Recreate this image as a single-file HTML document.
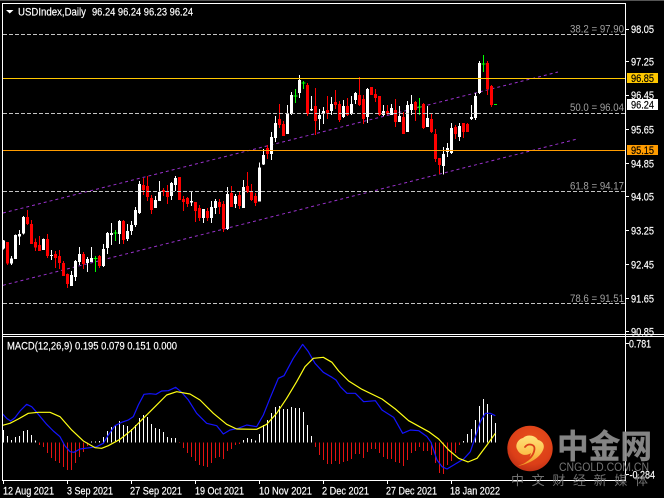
<!DOCTYPE html>
<html><head><meta charset="utf-8"><title>USDIndex Daily</title>
<style>
html,body{margin:0;padding:0;background:#000;width:664px;height:498px;overflow:hidden}
svg{display:block}
text{font-family:"Liberation Sans","Noto Sans CJK SC",sans-serif;font-size:11px;fill:#fff;stroke:#fff;stroke-width:.18px}
text.g{fill:#a0a0a0;stroke:none}
text.k{fill:#000;stroke:#000}
</style></head><body>
<svg width="664" height="498" viewBox="0 0 664 498" xmlns="http://www.w3.org/2000/svg">
<rect width="664" height="498" fill="#000"/>
<rect width="664" height="1" fill="#555"/>

<!-- channel lines -->
<g fill="none" stroke="#9932cc" stroke-dasharray="3 3">
<path d="M3 213L558 72"/>
<path d="M3 285.3L576 139.3"/>
</g>

<!-- candles -->
<g transform="scale(.33333)" shape-rendering="crispEdges" fill="none">
<g transform="translate(0,510)">
<path stroke="#fff" stroke-width="3" d="M10.5 210V238M34.5 258V285M46.5 193V267M58.5 180V225M70.5 138V193M130.5 205V240M154.5 240V270M214.5 303V348M226.5 270V333M238.5 231V285M262.5 261V306M274.5 231V276M310.5 222V291M322.5 186V252M334.5 159V225M358.5 150V222M382.5 162V213M394.5 153V195M406.5 111V171M418.5 33V132M466.5 78V114M478.5 33V93M514.5 36V90M526.5 18V63M574.5 66V108M610.5 117V159M634.5 93V159M646.5 87V132M682.5 51V180M706.5 72V114M730.5 30V114"/>
<path stroke="#fff" stroke-width="9" d="M10.5 212V235M34.5 266V280M46.5 195V267M58.5 192V200M70.5 141V190M130.5 207V240M154.5 255V258M214.5 315V348M226.5 273V321M238.5 252V276M262.5 267V279M274.5 264V276M310.5 237V288M322.5 189V234M334.5 189V195M358.5 153V192M382.5 183V207M394.5 165V183M406.5 120V165M418.5 42V129M466.5 90V114M478.5 66V93M514.5 39V78M526.5 24V45M574.5 93V98M610.5 117V144M634.5 111V144M646.5 93V114M682.5 72V177M706.5 78V102M730.5 51V114"/>
<path stroke="#f00" stroke-width="3" d="M22.5 216V285M82.5 120V165M94.5 150V222M106.5 205V243M118.5 198V243M142.5 192V264M166.5 243V294M178.5 240V297M190.5 273V318M202.5 310V354M250.5 246V297M298.5 255V294M370.5 150V222M430.5 24V75M442.5 18V93M454.5 75V132M490.5 54V78M502.5 45V102M538.5 21V90M550.5 78V123M562.5 81V111M586.5 96V156M598.5 105V153M622.5 114V153M658.5 87V132M670.5 93V186M694.5 48V111M718.5 66V117M742.5 6V69M754.5 42V93M766.5 69V108"/>
<path stroke="#f00" stroke-width="9" d="M22.5 216V280M82.5 141V162M94.5 162V222M106.5 216V232M118.5 225V243M142.5 207V258M166.5 252V264M178.5 258V279M190.5 279V318M202.5 312V342M250.5 252V282M298.5 258V288M370.5 153V210M430.5 45V60M442.5 48V81M454.5 84V120M490.5 60V66M502.5 66V81M538.5 21V90M550.5 87V96M562.5 84V102M586.5 96V123M598.5 114V144M622.5 123V144M658.5 96V111M670.5 102V177M694.5 69V111M718.5 75V108M742.5 48V66M754.5 63V90M766.5 78V99"/>
<path stroke="#0f0" stroke-width="3" d="M286.5 258V306M346.5 180V213M340.5 189.500H352.500M280.500 265.500H292.500"/>
</g>
<g>
<path stroke="#fff" stroke-width="3" d="M778.500 487V604M790.500 447V495M814.500 396V480M826.500 348V426M862.500 315V402M874.500 276V345M898.500 225V294M934.500 288V333M958.500 327V390M970.500 321V372M994.500 291V345"/>
<path stroke="#fff" stroke-width="9" d="M778.500 502V604M790.500 465V493M814.500 411V462M826.500 369V414M862.500 342V402M874.500 285V342M898.500 240V279M934.500 327V331M958.500 345V357M970.500 333V339M994.500 312V333"/>
<path stroke="#f00" stroke-width="3" d="M802.500 435V477M838.500 312V384M850.500 363V408M922.500 249V348M946.500 264V405M982.500 288V357"/>
<path stroke="#f00" stroke-width="9" d="M802.500 444V462M838.500 357V375M850.500 372V408M922.500 255V342M946.500 318V363M982.500 330V340"/>
<path stroke="#0f0" stroke-width="3" d="M886.500 267V309M910.500 243V267M880.500 288.500H892.500M904.500 249.500H916.500"/>
</g>
<g transform="translate(996,0)">
<path stroke="#fff" stroke-width="3" d="M34.500 300V354M58.500 288V345M70.500 276V312M106.500 264V369M154.500 315V348M178.500 312V345M202.500 318V366M226.500 303V396M238.500 285V345M286.500 318V381M334.500 441V524M346.500 429V471M358.500 369V462M382.500 369V423M418.500 315V360M430.500 279V360M442.500 183V282"/>
<path stroke="#fff" stroke-width="9" d="M34.500 318V351M58.500 312V342M70.500 279V300M106.500 267V351M154.500 333V345M178.500 324V345M202.500 348V366M226.500 315V396M238.500 312V330M286.500 354V381M334.500 462V498M346.500 444V456M358.500 384V459M382.500 378V411M418.500 351V357M430.500 288V354M442.500 189V279"/>
<path stroke="#f00" stroke-width="3" d="M10.500 270V327M22.500 303V366M46.500 294V348M82.500 231V318M94.500 285V372M118.500 261V285M130.500 267V306M142.500 288V348M166.500 315V345M190.500 297V381M214.500 336V402M250.500 303V363M274.500 309V387M298.500 339V399M310.500 387V486M322.500 474V522M370.500 375V417M394.500 369V414M406.500 369V396M466.500 183V285M478.500 255V321"/>
<path stroke="#f00" stroke-width="9" d="M10.500 306V315M22.500 312V360M46.500 318V345M82.500 285V315M94.500 297V357M118.500 261V285M130.500 282V294M142.500 288V345M166.500 333V342M190.500 330V366M214.500 351V402M250.500 306V330M274.500 312V384M298.500 357V396M310.500 402V477M322.500 474V495M370.500 381V402M394.500 369V396M406.500 372V396M466.500 189V267M478.500 258V315"/>
<path stroke="#0f0" stroke-width="3" d="M262.500 294V345M454.500 165V216M256.500 320.500H268.500M448.500 192.500H460.500M486 313.500H495"/>
</g>
</g>

<!-- horizontal levels -->
<g shape-rendering="crispEdges" fill="none">
<path stroke="#ffc800" d="M3 78.500H626"/>
<path stroke="#ff9c00" d="M3 150.500H626"/>
<g stroke="#c4c4c4" stroke-dasharray="4 2">
<path d="M3 34.500H625"/><path d="M3 113.500H625"/><path d="M3 191.500H625"/><path d="M3 303.500H625"/>
</g>
</g>

<!-- MACD histogram -->
<g transform="scale(.33333)" shape-rendering="crispEdges" fill="none" stroke-width="3">
<g transform="translate(0,1005)">
<path stroke="#fff" d="M10.500 323V285M22.500 323V303M34.500 323V315M46.500 323V306M58.500 323V303M70.500 323V288M82.500 323V285M94.500 323V300M106.500 323V316M274.500 323V320M286.500 323V320M298.500 323V318M310.500 323V306M322.500 323V288M334.500 323V276M346.500 323V270M358.500 323V258M370.500 323V270M382.500 323V273M394.500 323V282M406.500 323V270M418.500 323V249M430.500 323V240M442.500 323V246M454.500 323V267M466.500 323V279M478.500 323V282M490.500 323V291M502.500 323V306M514.500 323V309M526.500 323V309M730.500 323V315M742.500 323V309M754.500 323V312M766.500 323V317M778.500 323V297M790.500 323V270M802.500 323V255M814.500 323V234M826.500 323V216M838.500 323V213M850.500 323V222M862.500 323V222M874.500 323V216M886.500 323V219M898.500 323V219M910.500 323V231M922.500 323V270M934.500 323V303"/>
<path stroke="#e41212" d="M118.500 323V330M130.500 323V336M142.500 323V354M154.500 323V369M166.500 323V378M178.500 323V384M190.500 323V396M202.500 323V405M214.500 323V405M226.500 323V384M238.500 323V366M250.500 323V351M262.500 323V333M538.500 323V324M550.500 323V339M562.500 323V354M574.500 323V366M586.500 323V378M598.500 323V390M610.500 323V393M622.500 323V396M634.500 323V384M646.500 323V369M658.500 323V366M670.500 323V372M682.500 323V348M694.500 323V342M706.500 323V330M718.500 323V327M946.500 323V336M958.500 323V360M970.500 323V375M982.500 323V387M994.500 323V387"/>
</g>
<g transform="translate(996,1005)">
<path stroke="#e41212" d="M10.500 323V378M22.500 323V387M34.500 323V381M46.500 323V378M58.500 323V372M70.500 323V357M82.500 323V357M94.500 323V369M106.500 323V351M118.500 323V342M130.500 323V342M142.500 323V354M154.500 323V366M166.500 323V372M178.500 323V372M190.500 323V381M202.500 323V384M214.500 323V393M226.500 323V375M238.500 323V354M250.500 323V348M262.500 323V336M274.500 323V348M286.500 323V348M298.500 323V360M310.500 323V384M322.500 323V414M334.500 323V417M346.500 323V390M358.500 323V378M370.500 323V354M382.500 323V330"/>
<path stroke="#fff" d="M394.500 323V318M406.500 323V297M418.500 323V282M430.500 323V255M442.500 323V213M454.500 323V192M466.500 323V207M478.500 323V240M490.500 323V264"/>
</g>
</g>

<!-- MACD lines -->
<g transform="scale(.33333) translate(0,1005)" fill="none" stroke-width="3.600" stroke-linejoin="round">
<path stroke="#1414ff" d="M8 237L20 250L32 258L45 248L60 228L80 208L95 215L110 232L125 250L140 268L160 288L180 305L195 333L210 350L222 352L240 342L255 340L270 338L290 335L310 325L325 300L345 272L365 262L385 255L400 245L415 210L432 178L450 176L468 178L485 168L505 167L527 157L545 172L565 195L590 235L620 265L650 272L670 297L690 285L715 280L740 270L770 275L790 240L810 190L835 130L852 122L880 70L908 28L925 50L945 85L970 112L996 127L1008 135L1021 155L1041 175L1066 175L1091 200L1126 197L1146 225L1181 247L1208 295L1231 285L1256 287L1281 305L1293 322L1311 375L1326 395L1341 402L1361 390L1391 372L1411 350L1428 300L1441 260L1456 235L1471 235L1486 242"/>
<path stroke="#ffff14" d="M8 271L30 265L55 252L85 235L115 232L150 232L180 245L215 285L250 318L285 338L305 340L325 332L360 313L395 285L430 250L465 215L500 180L530 170L570 177L600 195L640 235L680 268L710 282L770 283L800 268L830 235L860 190L890 140L915 95L940 70L970 67L996 82L1016 108L1046 138L1086 163L1146 192L1186 222L1226 257L1286 290L1316 312L1346 345L1376 370L1404 381L1431 370L1461 330L1486 295"/>
</g>

<!-- frames -->
<g shape-rendering="crispEdges" fill="none" stroke="#fff">
<path d="M2.500 3.500H625.500V480.500H2.500Z"/>
<path d="M2 334.500H664"/>
<path d="M2 336.500H664"/>
<path d="M625 29.500h4M625 61.500h4M625 95.500h4M625 129.500h4M625 163.500h4M625 196.500h4M625 230.500h4M625 264.500h4M625 298.500h4M625 331.500h4M625 343.500h4M625 474.500h4"/>
<path d="M3.500 480v4M67.500 480v4M131.500 480v4M195.500 480v4M259.500 480v4M323.500 480v4M387.500 480v4M451.500 480v4"/>
</g>

<!-- title -->
<polygon points="6,10 13.500,10 9.750,13.500" fill="#fff"/>
<text x="18" y="15.500" textLength="68" lengthAdjust="spacingAndGlyphs">USDIndex,Daily</text>
<text x="92" y="15.500" textLength="101" lengthAdjust="spacingAndGlyphs">96.24 96.24 96.23 96.24</text>

<!-- fib labels -->
<text class="g" x="570" y="32.500" textLength="54" lengthAdjust="spacingAndGlyphs">38.2 = 97.90</text>
<text class="g" x="570" y="111" textLength="54" lengthAdjust="spacingAndGlyphs">50.0 = 96.04</text>
<text class="g" x="570" y="189.500" textLength="54" lengthAdjust="spacingAndGlyphs">61.8 = 94.17</text>
<text class="g" x="570" y="302" textLength="54" lengthAdjust="spacingAndGlyphs">78.6 = 91.51</text>

<!-- price axis -->
<text x="631" y="33" textLength="23" lengthAdjust="spacingAndGlyphs">98.05</text>
<text x="631" y="65.500" textLength="23" lengthAdjust="spacingAndGlyphs">97.25</text>
<text x="631" y="99" textLength="23" lengthAdjust="spacingAndGlyphs">96.45</text>
<text x="631" y="133.500" textLength="23" lengthAdjust="spacingAndGlyphs">95.65</text>
<text x="631" y="167.500" textLength="23" lengthAdjust="spacingAndGlyphs">94.85</text>
<text x="631" y="200.500" textLength="23" lengthAdjust="spacingAndGlyphs">94.05</text>
<text x="631" y="234.500" textLength="23" lengthAdjust="spacingAndGlyphs">93.25</text>
<text x="631" y="268.500" textLength="23" lengthAdjust="spacingAndGlyphs">92.45</text>
<text x="631" y="302.500" textLength="23" lengthAdjust="spacingAndGlyphs">91.65</text>
<text x="631" y="335.500" textLength="23" lengthAdjust="spacingAndGlyphs">90.85</text>
<g shape-rendering="crispEdges">
<rect x="627" y="73" width="31" height="10" fill="#ffc800"/>
<rect x="627" y="99" width="31" height="11" fill="#fff"/>
<rect x="627" y="145" width="31" height="10" fill="#ff9c00"/>
</g>
<text class="k" x="631" y="82" textLength="23" lengthAdjust="spacingAndGlyphs">96.85</text>
<text class="k" x="631" y="108.500" textLength="23" lengthAdjust="spacingAndGlyphs">96.24</text>
<text class="k" x="631" y="154" textLength="23" lengthAdjust="spacingAndGlyphs">95.15</text>

<!-- MACD labels -->
<text x="7" y="349.500" textLength="170" lengthAdjust="spacingAndGlyphs">MACD(12,26,9) 0.195 0.079 0.151 0.000</text>
<text x="629" y="347.500" textLength="22" lengthAdjust="spacingAndGlyphs">0.781</text>
<text x="629.500" y="478.500" textLength="25.500" lengthAdjust="spacingAndGlyphs">-0.284</text>

<!-- date axis -->
<text x="3" y="494.500" textLength="51" lengthAdjust="spacingAndGlyphs">12 Aug 2021</text>
<text x="67" y="494.500" textLength="46" lengthAdjust="spacingAndGlyphs">3 Sep 2021</text>
<text x="130" y="494.500" textLength="52" lengthAdjust="spacingAndGlyphs">27 Sep 2021</text>
<text x="195" y="494.500" textLength="49" lengthAdjust="spacingAndGlyphs">19 Oct 2021</text>
<text x="259" y="494.500" textLength="53" lengthAdjust="spacingAndGlyphs">10 Nov 2021</text>
<text x="322" y="494.500" textLength="47" lengthAdjust="spacingAndGlyphs">2 Dec 2021</text>
<text x="386" y="494.500" textLength="51" lengthAdjust="spacingAndGlyphs">27 Dec 2021</text>
<text x="450" y="494.500" textLength="50" lengthAdjust="spacingAndGlyphs">18 Jan 2022</text>

<!-- watermark -->
<defs>
<radialGradient id="lg" cx="55%" cy="35%" r="70%"><stop offset="0" stop-color="#e8501c"/><stop offset=".7" stop-color="#dc3f18"/><stop offset="1" stop-color="#b92c14"/></radialGradient>
<linearGradient id="ly" x1="0" y1="0" x2="0" y2="1"><stop offset="0" stop-color="#ffe27a"/><stop offset=".6" stop-color="#fcc04a"/><stop offset="1" stop-color="#ee8e20"/></linearGradient>
</defs>
<circle cx="530" cy="448.500" r="22.700" fill="url(#lg)"/>
<path fill="url(#ly)" d="M518 466C528 464 538 459 542 452C546 446 543 441 538 440C535 435 527 434 523 438C518 439 515 445 517 449C520 456 527 456 531 453C528 464 524 463 518 466Z"/>
<path fill="none" stroke="#dc3f18" stroke-width="1.800" stroke-linecap="round" d="M525 447C528 443 535 444 534.500 449C534 454 531 458 526 461"/>
<g opacity=".95">
<text x="557" y="458" textLength="95" lengthAdjust="spacingAndGlyphs" style="font-size:33px;font-weight:700;fill:#8c8c8c;stroke:#8c8c8c;stroke-width:.4px">中金网</text>
<text x="559" y="471" textLength="90" lengthAdjust="spacingAndGlyphs" style="font-size:11.500px;fill:#7c7c7c;stroke:none">CNGOLD.COM.CN</text>
<text x="511" y="485" textLength="137" lengthAdjust="spacing" style="font-size:13px;fill:#777;stroke:none">中文财经新媒体</text>
</g>
</svg>
</body></html>
